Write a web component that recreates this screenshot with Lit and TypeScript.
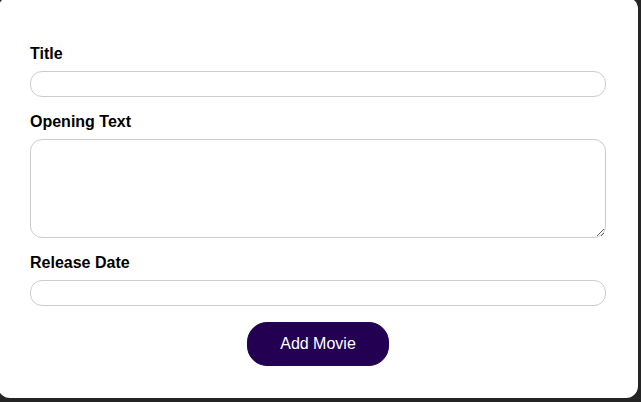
import { LitElement, html, css } from "lit";
import { customElement } from "lit/decorators.js";

@customElement("app-root")
export class AppRoot extends LitElement {
  static styles = css`
    :host {
      display: flow-root;
      min-height: 100vh;
      overflow: hidden;
      background: #242424;
      font-family: "Liberation Sans", Arial, sans-serif;
      font-size: 16px;
      line-height: 18px;
      color: #000;
    }
    .card {
      margin: -3px 3px 4px -2px;
      padding: 48px 32px 32px;
      border-radius: 12px;
      background: #fff;
    }
    .control {
      display: flex;
      flex-direction: column;
      gap: 8px;
      margin-bottom: 16px;
    }
    .label {
      font-weight: bold;
    }
    .field {
      box-sizing: border-box;
      width: 100%;
      height: 26px;
      margin: 0;
      padding: 3px 8px;
      border: 1px solid #ccc;
      border-radius: 12px;
      background: #fff;
      font: inherit;
      outline: none;
    }
    .multiline {
      height: 99px;
      resize: both;
    }
    .field:focus {
      border-color: #230052;
    }
    .actions {
      display: flex;
      justify-content: center;
    }
    .submit {
      padding: 12px 32px;
      border: 1px solid #230052;
      border-radius: 20px;
      background: #230052;
      color: #fff;
      font: inherit;
      cursor: pointer;
    }
  `;

  private submit(event: Event) {
    event.preventDefault();
  }

  render() {
    return html`
      <main class="card">
        <form @submit=${this.submit}>
          <div class="control">
            <label class="label" for="title">Title</label>
            <input class="field" type="text" id="title" />
          </div>
          <div class="control">
            <label class="label" for="opening-text">Opening Text</label>
            <textarea class="field multiline" id="opening-text"></textarea>
          </div>
          <div class="control">
            <label class="label" for="date">Release Date</label>
            <input class="field" type="text" id="date" />
          </div>
          <div class="actions">
            <button class="submit">Add Movie</button>
          </div>
        </form>
      </main>
    `;
  }
}
